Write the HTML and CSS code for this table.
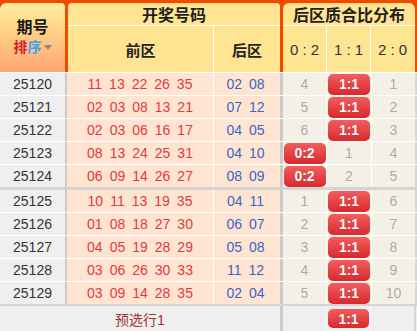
FILE: index.html
```html
<!DOCTYPE html>
<html lang="zh">
<head>
<meta charset="utf-8">
<link rel="stylesheet" href="styles.css">
</head>
<body>
<div class="board">
  <div class="head">
    <div class="h-id">
      <div class="t1">期号</div>
      <div class="t2"><span class="sr">排</span><span class="sb">序</span><span class="tri"></span></div>
    </div>
    <div class="h-draw">
      <div class="h-title">开奖号码</div>
      <div class="h-sub">
        <div class="hs-front">前区</div>
        <div class="hs-back">后区</div>
      </div>
    </div>
    <div class="h-dist">
      <div class="h-title">后区质合比分布</div>
      <div class="h-sub">
        <div class="hs-d">0 : 2</div>
        <div class="hs-d">1 : 1</div>
        <div class="hs-d">2 : 0</div>
      </div>
    </div>
  </div>

  <div class="row">
    <div class="c-id">25120</div>
    <div class="c-front"><span>11</span><span>13</span><span>22</span><span>26</span><span>35</span></div>
    <div class="c-back"><span>02</span><span>08</span></div>
    <div class="c-d">4</div><div class="c-d"><span class="badge">1:1</span></div><div class="c-d">1</div>
  </div>
  <div class="row">
    <div class="c-id">25121</div>
    <div class="c-front"><span>02</span><span>03</span><span>08</span><span>13</span><span>21</span></div>
    <div class="c-back"><span>07</span><span>12</span></div>
    <div class="c-d">5</div><div class="c-d"><span class="badge">1:1</span></div><div class="c-d">2</div>
  </div>
  <div class="row">
    <div class="c-id">25122</div>
    <div class="c-front"><span>02</span><span>03</span><span>06</span><span>16</span><span>17</span></div>
    <div class="c-back"><span>04</span><span>05</span></div>
    <div class="c-d">6</div><div class="c-d"><span class="badge">1:1</span></div><div class="c-d">3</div>
  </div>
  <div class="row">
    <div class="c-id">25123</div>
    <div class="c-front"><span>08</span><span>13</span><span>24</span><span>25</span><span>31</span></div>
    <div class="c-back"><span>04</span><span>10</span></div>
    <div class="c-d"><span class="badge">0:2</span></div><div class="c-d">1</div><div class="c-d">4</div>
  </div>
  <div class="row">
    <div class="c-id">25124</div>
    <div class="c-front"><span>06</span><span>09</span><span>14</span><span>26</span><span>27</span></div>
    <div class="c-back"><span>08</span><span>09</span></div>
    <div class="c-d"><span class="badge">0:2</span></div><div class="c-d">2</div><div class="c-d">5</div>
  </div>
  <div class="row row-group">
    <div class="c-id">25125</div>
    <div class="c-front"><span>10</span><span>11</span><span>13</span><span>19</span><span>35</span></div>
    <div class="c-back"><span>04</span><span>11</span></div>
    <div class="c-d">1</div><div class="c-d"><span class="badge">1:1</span></div><div class="c-d">6</div>
  </div>
  <div class="row">
    <div class="c-id">25126</div>
    <div class="c-front"><span>01</span><span>08</span><span>18</span><span>27</span><span>30</span></div>
    <div class="c-back"><span>06</span><span>07</span></div>
    <div class="c-d">2</div><div class="c-d"><span class="badge">1:1</span></div><div class="c-d">7</div>
  </div>
  <div class="row">
    <div class="c-id">25127</div>
    <div class="c-front"><span>04</span><span>05</span><span>19</span><span>28</span><span>29</span></div>
    <div class="c-back"><span>05</span><span>08</span></div>
    <div class="c-d">3</div><div class="c-d"><span class="badge">1:1</span></div><div class="c-d">8</div>
  </div>
  <div class="row">
    <div class="c-id">25128</div>
    <div class="c-front"><span>03</span><span>06</span><span>26</span><span>30</span><span>33</span></div>
    <div class="c-back"><span>11</span><span>12</span></div>
    <div class="c-d">4</div><div class="c-d"><span class="badge">1:1</span></div><div class="c-d">9</div>
  </div>
  <div class="row">
    <div class="c-id">25129</div>
    <div class="c-front"><span>03</span><span>09</span><span>14</span><span>28</span><span>35</span></div>
    <div class="c-back"><span>02</span><span>04</span></div>
    <div class="c-d">5</div><div class="c-d"><span class="badge">1:1</span></div><div class="c-d">10</div>
  </div>

  <div class="foot">
    <div class="f-left">预选行1</div>
    <div class="f-d"></div><div class="f-d"><span class="badge badge-sm">1:1</span></div><div class="f-d"></div>
  </div>
</div>
</body>
</html>
```

FILE: styles.css
```css
* { box-sizing: border-box; }
html, body { margin: 0; padding: 0; background: #ffffff; }
body {
  font-family: "Liberation Sans", "Noto Sans CJK SC", sans-serif;
  font-size: 14px;
  color: #333333;
  width: 417px;
  height: 331px;
  overflow: hidden;
}
.board { width: 417px; }

/* header */
.head {
  display: flex;
  gap: 3px;
  height: 72px;
  padding: 3px 2px 0 0;
  background: #f24b00;
}
.h-id {
  width: 65px;
  border-radius: 6px 4px 0 0;
  background: linear-gradient(#ffeb9f, #ffd68a 35%, #ffa574);
  display: flex;
  flex-direction: column;
  align-items: center;
  padding-top: 17px;
}
.t1 {
  font-family: "Liberation Sans", "Noto Sans CJK SC", sans-serif;
  font-weight: 700;
  font-size: 16px;
  line-height: 16px;
  height: 16px;
  color: #1a1a1a;
}
.t2 {
  margin-top: 4px;
  font-family: "Liberation Sans", "Noto Sans CJK SC", sans-serif;
  font-weight: 700;
  font-size: 14px;
  line-height: 15px;
  height: 15px;
  display: flex;
  align-items: center;
}
.sr { color: #d42028; }
.sb { color: #3aa2ee; }
.tri {
  width: 0;
  height: 0;
  margin-left: 2px;
  border-left: 4px solid transparent;
  border-right: 4px solid transparent;
  border-top: 5px solid #8a8a8a;
}
.h-draw, .h-dist {
  display: flex;
  flex-direction: column;
  background: #ffe492;
  border-radius: 4px 4px 0 0;
}
.h-draw { width: 212px; }
.h-dist { width: 132px; border-radius: 6px 6px 0 0; }
.h-title {
  height: 23px;
  border-bottom: 1px solid #ffffff;
  display: flex;
  align-items: center;
  justify-content: center;
  font-family: "Noto Sans CJK SC", sans-serif;
  font-weight: 700;
  font-size: 16px;
  color: #1f1f1f;
}
.h-sub {
  flex: 1;
  display: flex;
}
.h-sub > div {
  display: flex;
  align-items: center;
  justify-content: center;
}
.hs-front {
  width: 146px;
  border-right: 1px solid #ffffff;
  font-family: "Noto Sans CJK SC", sans-serif;
  font-weight: 700;
  font-size: 15px;
  color: #222;
}
.hs-back {
  width: 66px;
  font-family: "Noto Sans CJK SC", sans-serif;
  font-weight: 700;
  font-size: 15px;
  color: #222;
}
.hs-d {
  width: 44px;
  font-size: 15px;
  color: #333;
  border-right: 1px solid #ffffff;
  white-space: pre;
}
.hs-d:last-child { width: 43px; border-right: 0; }
.hs-d:nth-child(2) { width: 44px; }

/* rows */
.row {
  display: flex;
  height: 23px;
  border-top: 1px solid #ffffff;
}
.row-group {
  height: 25px;
  border-top: 3px solid #d4d4d4;
}
.row > div {
  display: flex;
  align-items: center;
  justify-content: center;
}
.c-id {
  width: 67px;
  background: #efefef;
  border-right: 2px solid #c9c9c9;
  color: #333333;
}
.c-front, .c-back {
  background: #ffe5d1;
  gap: 7px;
}
.c-front {
  width: 147px;
  border-right: 1px solid #ffffff;
  color: #e4393f;
}
.c-back {
  width: 69px;
  padding-right: 3px;
  border-right: 3px solid #cbcbcb;
  color: #3a66c8;
}
.c-d {
  width: 45px;
  background: #f5f0e6;
  border-right: 1px solid #ffffff;
  color: #acacac;
}
.c-d:nth-child(4) { width: 44px; }
.c-d:last-child {
  width: 45px;
  border-right: 2px solid #d6d6d6;
}

.badge {
  display: flex;
  align-items: center;
  justify-content: center;
  width: 42px;
  height: 21px;
  border-radius: 5px;
  background: linear-gradient(#f35d5d, #d8292d);
  color: #ffffff;
  font-weight: 700;
  font-size: 14px;
  text-shadow: 0 0 1px rgba(120, 0, 0, 0.4);
}
.badge-sm { height: 19px; width: 41px; }

/* footer */
.foot {
  display: flex;
  height: 27px;
  border-top: 2px solid #d4d4d4;
  background: #efefef;
}
.foot > div {
  display: flex;
  align-items: center;
  justify-content: center;
}
.f-left {
  width: 283px;
  border-right: 3px solid #cbcbcb;
  color: #a33434;
  font-family: "Liberation Sans", "Noto Sans CJK SC", sans-serif;
  font-size: 14px;
}
.f-d {
  width: 44px;
  border-right: 1px solid #f7f7f7;
}
.f-d:last-child {
  width: 45px;
  border-right: 2px solid #d6d6d6;
}
```
